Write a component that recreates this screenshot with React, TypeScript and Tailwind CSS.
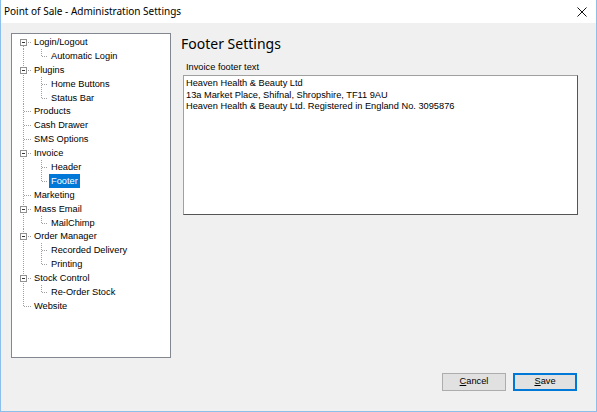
import React from 'react'

type Node = { label: string; level: 0 | 1; expander?: boolean; lastChild?: boolean; selected?: boolean }

const nodes: Node[] = [
  { label: 'Login/Logout', level: 0, expander: true },
  { label: 'Automatic Login', level: 1, lastChild: true },
  { label: 'Plugins', level: 0, expander: true },
  { label: 'Home Buttons', level: 1 },
  { label: 'Status Bar', level: 1, lastChild: true },
  { label: 'Products', level: 0 },
  { label: 'Cash Drawer', level: 0 },
  { label: 'SMS Options', level: 0 },
  { label: 'Invoice', level: 0, expander: true },
  { label: 'Header', level: 1 },
  { label: 'Footer', level: 1, lastChild: true, selected: true },
  { label: 'Marketing', level: 0 },
  { label: 'Mass Email', level: 0, expander: true },
  { label: 'MailChimp', level: 1, lastChild: true },
  { label: 'Order Manager', level: 0, expander: true },
  { label: 'Recorded Delivery', level: 1 },
  { label: 'Printing', level: 1, lastChild: true },
  { label: 'Stock Control', level: 0, expander: true },
  { label: 'Re-Order Stock', level: 1, lastChild: true },
  { label: 'Website', level: 0 },
]

const dot = { stroke: '#a0a0a0', strokeWidth: 1, strokeDasharray: '1 1', shapeRendering: 'crispEdges' as const }

function Lines({ node, first, last }: { node: Node; first: boolean; last: boolean }) {
  const w = node.level === 0 ? 20 : 37
  return (
    <svg width={w} height={14} className="shrink-0">
      <line x1={11.5} x2={11.5} y1={first ? 7 : 0} y2={last ? 8 : 14} {...dot} />
      {node.level === 0 && <line x1={12} x2={20} y1={7.5} y2={7.5} {...dot} />}
      {node.level === 1 && (
        <>
          <line x1={29.5} x2={29.5} y1={0} y2={node.lastChild ? 8 : 14} {...dot} />
          <line x1={30} x2={36} y1={7.5} y2={7.5} {...dot} />
        </>
      )}
      {node.expander && (
        <g shapeRendering="crispEdges">
          <rect x={8.5} y={4.5} width={6} height={6} fill="#fff" stroke="#919191" />
          <line x1={10} x2={13} y1={7.5} y2={7.5} stroke="#333" />
        </g>
      )}
    </svg>
  )
}

function Tree() {
  return (
    <div className="w-[160px] h-[325px] shrink-0 border border-[#828790] bg-white flex flex-col pt-[1px]">
      {nodes.map((n, i) => (
        <div key={n.label} className="flex items-center h-[13.9px]">
          <Lines node={n} first={i === 0} last={i === nodes.length - 1} />
          <span
            className={
              'px-[2px] h-[14px] leading-[14px] whitespace-nowrap ' +
              (n.selected ? 'bg-[#0078d7] text-white' : 'text-black')
            }
          >
            {n.label}
          </span>
        </div>
      ))}
    </div>
  )
}

export default function App() {
  return (
    <div
      className="w-[597px] h-[412px] flex flex-col bg-[#f0f0f0] border-x border-b border-[#8cbfea] text-[9.25px] text-black"
      style={{ fontFamily: '"Liberation Sans", Arial, sans-serif' }}
    >
      <div className="h-[23px] shrink-0 bg-white flex items-center justify-between pl-[3px] pr-[9px]">
        <span className="text-[10px] text-black" style={{ fontFamily: '"Noto Sans", "Open Sans", sans-serif' }}>
          Point of Sale - Administration Settings
        </span>
        <svg width="10" height="10" viewBox="0 0 10 10">
          <path d="M0.5 0.5 L9.5 9.5 M9.5 0.5 L0.5 9.5" stroke="#111" strokeWidth="1" />
        </svg>
      </div>

      <div className="flex-1 flex pt-[10px] pl-[10px] pr-[22px] pb-[20px]">
        <Tree />

        <div className="flex-1 flex flex-col ml-[10px]">
          <h1
            className="h-[21px] leading-[21px] text-[14px] text-black"
            style={{ fontFamily: '"Noto Sans", "Open Sans", sans-serif' }}
          >
            Footer Settings
          </h1>
          <label className="mt-[7px] ml-[5px] leading-[12px]">Invoice footer text</label>
          <div className="mt-[2px] ml-[2px] w-[395px] h-[140px] bg-white border border-t-[#a0a0a0] border-l-[#a0a0a0] border-r-[#555] border-b-[#555] pt-[2px] pl-[2px] leading-[11.5px]">
            <div>Heaven Health &amp; Beauty Ltd</div>
            <div>13a Market Place, Shifnal, Shropshire, TF11 9AU</div>
            <div>Heaven Health &amp; Beauty Ltd. Registered in England No. 3095876</div>
          </div>

          <div className="mt-auto flex justify-end gap-[7px] mr-[1px]">
            <button className="w-[64px] h-[18px] bg-[#e1e1e1] border border-[#adadad] leading-none">
              <span className="underline">C</span>ancel
            </button>
            <button className="w-[64px] h-[18px] bg-[#e1e1e1] border-2 border-[#0078d7] leading-none">
              <span className="underline">S</span>ave
            </button>
          </div>
        </div>
      </div>
    </div>
  )
}
